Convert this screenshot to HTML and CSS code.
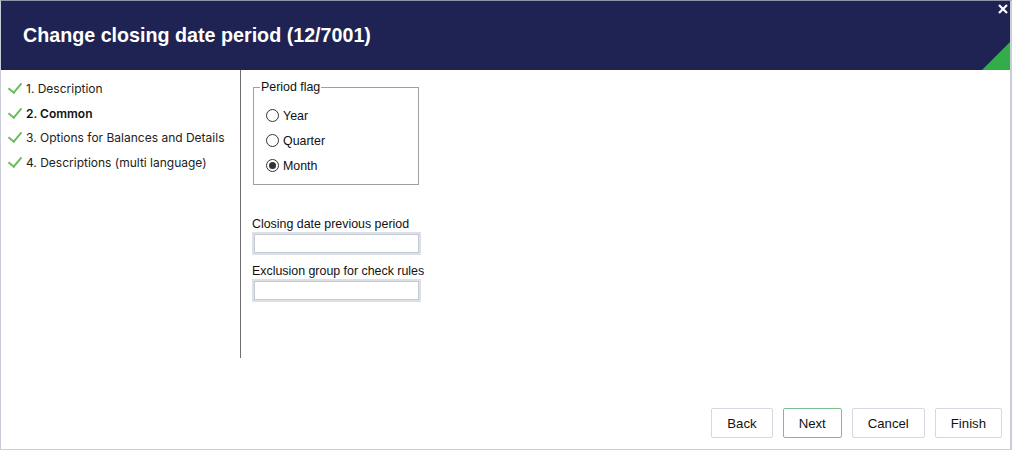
FILE: index.html
```html
<!DOCTYPE html>
<html lang="en">

<head>
    <meta charset="UTF-8">
    <title>Change closing date period</title>
    <link rel="stylesheet" href="styles.css">
</head>

<body>
    <div class="dialog">
        <div class="dialog-header">
            <h1>Change closing date period (12/7001)</h1>
            <span class="close-btn">
                <svg width="10" height="10" viewBox="0 0 10 10">
                    <path d="M1 1 L9 9 M9 1 L1 9" stroke="#ffffff" stroke-width="2.2" />
                </svg>
            </span>
            <span class="corner"></span>
        </div>
        <div class="dialog-body">
            <ul class="steps">
                <li><span class="check"></span>1. Description</li>
                <li class="active"><span class="check"></span>2. Common</li>
                <li><span class="check"></span>3. Options for Balances and Details</li>
                <li><span class="check"></span>4. Descriptions (multi language)</li>
            </ul>
            <div class="content">
                <fieldset class="period-flag">
                    <legend>Period flag</legend>
                    <label class="radio"><span class="dot"></span>Year</label>
                    <label class="radio"><span class="dot"></span>Quarter</label>
                    <label class="radio"><span class="dot checked"></span>Month</label>
                </fieldset>
                <div class="field">
                    <label>Closing date previous period</label>
                    <div class="input"></div>
                </div>
                <div class="field">
                    <label>Exclusion group for check rules</label>
                    <div class="input"></div>
                </div>
            </div>
        </div>
        <div class="dialog-footer">
            <button class="btn">Back</button>
            <button class="btn primary">Next</button>
            <button class="btn">Cancel</button>
            <button class="btn">Finish</button>
        </div>
    </div>
</body>

</html>
```
FILE: styles.css
```css
body {
    margin: 0;
    padding: 0;
    background-color: #ffffff;
    font-family: 'Liberation Sans', Arial, sans-serif;
}
.dialog {
    box-sizing: border-box;
    width: 1012px;
    height: 450px;
    border: 1px solid #c9cdd8;
    border-top-color: #8f93a8;
    border-right-width: 2px;
    display: flex;
    flex-direction: column;
}
.dialog-header {
    position: relative;
    height: 69px;
    background-color: #1f2353;
    display: flex;
    align-items: center;
    padding-left: 22px;
    overflow: hidden;
}
.dialog-header h1 {
    margin: 0;
    color: #ffffff;
    font-size: 19.7px;
    font-weight: bold;
}
.close-btn {
    position: absolute;
    right: 2px;
    top: 3px;
    line-height: 0;
}
.corner {
    position: absolute;
    right: 0;
    bottom: 0;
    width: 0;
    height: 0;
    border-left: 28px solid transparent;
    border-bottom: 28px solid #33ad4a;
}
.dialog-body {
    display: flex;
    height: 288px;
}
.steps {
    list-style: none;
    margin: 0;
    padding: 6px 0 0 7px;
    width: 232px;
    border-right: 1px solid #6e6e6e;
    font-family: Inter, 'Noto Sans', sans-serif;
    font-size: 12px;
    color: #222222;
}
.steps li {
    display: flex;
    align-items: center;
    height: 24.7px;
}
.steps li.active {
    font-weight: 600;
    color: #111111;
}
.check {
    width: 6px;
    height: 11px;
    border-right: 2px solid #6dbb5f;
    border-bottom: 2px solid #6dbb5f;
    transform: rotate(40deg);
    margin: -4px 7px 0 3px;
}
.content {
    padding: 10px 0 0 11px;
    font-size: 12.4px;
    color: #111111;
}
.period-flag {
    width: 152px;
    height: 94px;
    margin: 0 0 32px 1px;
    padding: 9px 0 0 12px;
    border: 1px solid #a0a0a0;
}
.period-flag legend {
    padding: 0 1px;
    margin-left: -6px;
}
.radio {
    display: flex;
    align-items: center;
    height: 25px;
}
.dot {
    box-sizing: border-box;
    width: 13px;
    height: 13px;
    border: 1px solid #333333;
    border-radius: 50%;
    margin-right: 4px;
    display: flex;
    align-items: center;
    justify-content: center;
}
.dot.checked::after {
    content: "";
    width: 7px;
    height: 7px;
    border-radius: 50%;
    background-color: #333333;
}
.field {
    margin-bottom: 9px;
}
.field label {
    display: block;
    margin-bottom: 1px;
}
.input {
    box-sizing: border-box;
    width: 169px;
    height: 23px;
    border: 2px solid #dde1e7;
    box-shadow: inset 0 0 0 1px #c4cad4;
    background-color: #ffffff;
}
.dialog-footer {
    flex: 1;
    display: flex;
    justify-content: flex-end;
    align-items: flex-end;
    gap: 10px;
    padding: 0 8px 11px 0;
}
.btn {
    height: 30px;
    padding: 0 15px;
    background-color: #ffffff;
    border: 1px solid #d3d8e2;
    border-radius: 2px;
    font-family: 'Liberation Sans', Arial, sans-serif;
    font-size: 13.2px;
    color: #111111;
}
.btn.primary {
    border-color: #80bd8e;
}
```
